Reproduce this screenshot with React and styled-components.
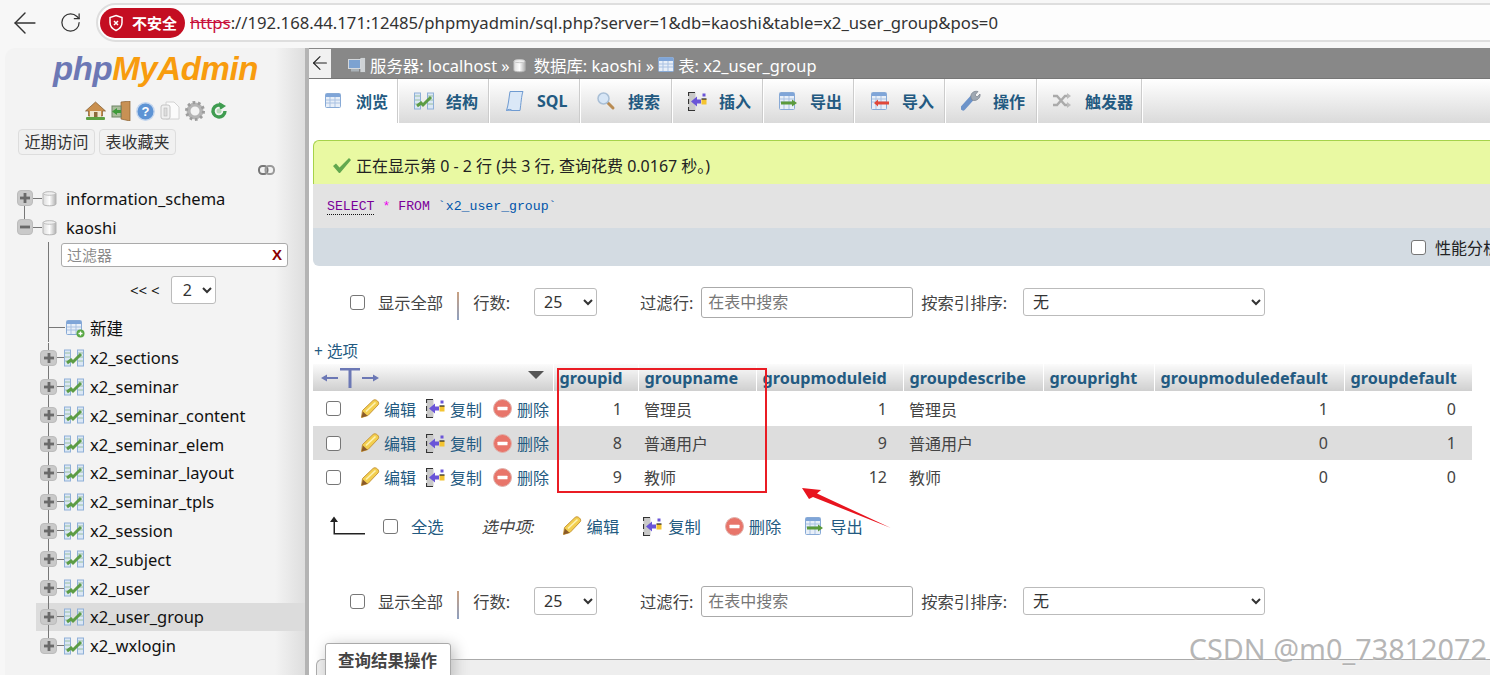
import React from 'react'
import styled, { createGlobalStyle } from 'styled-components'
import { ArrowLeft, RotateCw } from 'lucide-react'

const FONT = '"Noto Sans", "Noto Sans CJK SC", sans-serif'

const Global = createGlobalStyle`
  html, body { margin: 0; padding: 0; background: #fff; overflow: hidden; }
  body { font-family: ${FONT}; font-size: 16px; color: #444; }
  * { box-sizing: border-box; }
`

const Page = styled.div`
  position: relative;
  width: 1490px;
  height: 675px;
  overflow: hidden;
  display: flex;
  flex-direction: column;
  background: #f7f7f7;
`

/* browser chrome */
const BrowserBar = styled.div`
  flex: 0 0 48px;
  display: flex;
  align-items: flex-start;
  padding: 3px 0 0 13px;
  overflow: hidden;
`
const ChromeButton = styled.div`
  flex: 0 0 24px;
  min-width: 0;
  height: 39px;
  margin-right: 21px;
  display: flex;
  align-items: center;
  justify-content: center;
  color: #333;
  & > svg { flex: none; }
`
const AddressPill = styled.div`
  flex: 0 0 1440px;
  height: 39px;
  margin-left: -7px;
  border: 2px solid #dedede;
  border-radius: 20px;
  background: #fdfdfd;
  display: flex;
  align-items: center;
  padding-left: 2px;
`
const Insecure = styled.div`
  flex: 0 0 85px;
  height: 30px;
  border-radius: 15px;
  background: #c40e22;
  color: #fff;
  font-size: 15px;
  font-weight: 700;
  display: flex;
  align-items: center;
  padding-left: 7px;
  gap: 7px;
  white-space: nowrap;
`
const Url = styled.div`
  margin-left: 5px;
  font-size: 16.7px;
  color: #333;
  white-space: nowrap;
`
const Scheme = styled.span`
  color: #c8103a;
  text-decoration: line-through;
`

const Body = styled.div`
  flex: 1;
  display: flex;
  min-height: 0;
`

/* left navigation */
const Sidebar = styled.div`
  flex: 0 0 300px;
  margin-left: 5px;
  border-radius: 10px 0 0 0;
  background: linear-gradient(to right, #f3f3f3 0, #f3f3f3 270px, #dedede 300px);
  color: #111;
  display: flex;
  flex-direction: column;
`
const Splitter = styled.div`
  flex: 0 0 4px;
  background: #b4b4b4;
`
const Logo = styled.div`
  margin: 1px 0 0 48px;
  font-family: "Liberation Sans", sans-serif;
  font-size: 33px;
  line-height: 40px;
  font-weight: 700;
  font-style: italic;
  letter-spacing: -0.4px;
  color: #f89c0e;
  white-space: nowrap;
`
const LogoPhp = styled.span`
  color: #6c78b5;
`
const NavIcons = styled.div`
  margin: 11px 0 0 80px;
  height: 22px;
  display: flex;
  align-items: center;
  gap: 5px;
`
const Recent = styled.div`
  margin: 7px 0 0 13px;
  display: flex;
  gap: 4px;
`
const RecentButton = styled.div`
  width: 77px;
  height: 26px;
  border: 1px solid #ddd;
  border-radius: 4px;
  background: #f1f1f1;
  font-size: 16px;
  line-height: 24px;
  text-align: center;
  color: #333;
`
const LinkRow = styled.div`
  margin: 9px 0 0 253px;
  height: 14px;
  display: flex;
`
const Tree = styled.div`
  margin-top: 6px;
  display: flex;
  flex-direction: column;
`
const TreeRow = styled.div`
  position: relative;
  height: 28.8px;
  display: flex;
  align-items: center;
  white-space: nowrap;
  font-size: 16.5px;
  padding-left: ${props => (props.$db ? '12px' : '4px')};
  margin-left: ${props => (props.$db ? '0' : '31px')};
  background: ${props => (props.$active ? '#dcdcdc' : 'transparent')};
  &::before {
    content: '';
    position: absolute;
    background: #777;
    width: 1px;
    left: ${props => (props.$db ? '19px' : '12px')};
    top: ${props => (props.$first ? '14px' : '0')};
    bottom: ${props => (props.$last ? '14px' : '0')};
  }
`
const NewRow = styled(TreeRow)`
  margin-bottom: 1px;
`
const Expander = styled.span`
  position: relative;
  z-index: 1;
  flex: 0 0 ${props => (props.$db ? 16 : 17)}px;
  height: 16px;
  border-radius: 4px;
  background: #c9c9c9;
  border: 1px solid #bcbcbc;
  display: flex;
  align-items: center;
  justify-content: center;
`
const Stub = styled.span`
  flex: 0 0 ${props => props.$w}px;
  margin-left: ${props => props.$l || 0}px;
  height: 1px;
  background: #777;
`
const RowName = styled.span`
  margin-left: ${props => props.$gap}px;
`
const FilterBlock = styled.div`
  margin-left: 31px;
  padding: 1px 0 10px 11px;
  position: relative;
  &::before {
    content: '';
    position: absolute;
    left: 12px;
    top: 0;
    bottom: 0;
    width: 1px;
    background: #777;
  }
`
const TreeFilter = styled.div`
  margin-left: 14px;
  width: 227px;
  height: 24px;
  border: 1px solid #aaa;
  border-radius: 3px;
  background: #fff;
  display: flex;
  align-items: center;
  justify-content: space-between;
  padding: 0 5px 0 5px;
  font-size: 15px;
  color: #8a8a8a;
`
const ClearX = styled.span`
  font-family: "Liberation Sans", sans-serif;
  font-weight: 700;
  font-size: 15px;
  color: #8b0000;
`
const Pager = styled.div`
  margin: 9px 0 0 83px;
  height: 28px;
  display: flex;
  align-items: center;
  gap: 11px;
  font-size: 15px;
  color: #111;
`
const SmallSelect = styled.select`
  display: block;
  width: ${props => props.$w}px;
  height: 28px;
  border: 1px solid #bbb;
  border-radius: 3px;
  background: #fff;
  font-family: ${FONT};
  font-size: 16px;
  color: #333;
  padding-left: ${props => props.$pad}px;
`

/* main frame */
const Main = styled.div`
  flex: 1;
  min-width: 0;
  background: #fff;
  overflow: hidden;
  display: flex;
  flex-direction: column;
`
const ServerBar = styled.div`
  flex: 0 0 31px;
  background: #888;
  border-bottom: 1px solid #777;
  display: flex;
  align-items: center;
  color: #fff;
  font-size: 16.4px;
  white-space: nowrap;
`
const Collapse = styled.div`
  flex: 0 0 22px;
  height: 29px;
  background: #f1f1f1;
  color: #222;
  display: flex;
  align-items: center;
  justify-content: center;
  margin-right: 17px;
`
const Crumb = styled.span`
  display: flex;
  align-items: center;
  gap: ${props => props.$gap}px;
  margin-right: 3px;
  padding-top: 4px;
`
const Tabs = styled.div`
  flex: 0 0 44px;
  display: flex;
  background: linear-gradient(#fff, #dadada);
`
const Tab = styled.div`
  flex: 0 0 ${props => props.$w}px;
  height: 44px;
  display: flex;
  align-items: center;
  padding-left: ${props => props.$pad}px;
  gap: ${props => props.$gap}px;
  border-right: 1px solid #fff;
  box-shadow: inset -1px 0 0 #ccc;
  background: ${props => (props.$active ? '#fff' : 'transparent')};
  color: #235a81;
  font-weight: 700;
  font-size: 16px;
  white-space: nowrap;
`
const Notice = styled.div`
  margin: 17px -40px 0 4px;
  height: 44px;
  background: #e9f9a2;
  border: solid #a6d24a;
  border-width: 1px 0 0 1px;
  border-radius: 6px 0 0 0;
  display: flex;
  align-items: center;
  padding: 4px 0 0 18px;
  gap: 4px;
  color: #222;
  font-size: 16px;
`
const SqlBox = styled.div`
  margin: 0 -40px 0 4px;
  height: 44px;
  background: #e3e3e3;
  padding: 14px 0 0 14px;
  font-family: "Liberation Mono", monospace;
  font-size: 13.2px;
  line-height: 17px;
  white-space: pre;
  color: #0055aa;
`
const Keyword = styled.span`
  color: #7a0099;
  ${props => (props.$dotted ? 'border-bottom: 1px dotted #111;' : '')}
`
const Star = styled.span`
  color: #ee00ee;
`
const ToolBox = styled.div`
  margin: 0 -9px 0 4px;
  height: 38px;
  background: #d3dbe2;
  border-radius: 0 0 0 6px;
  display: flex;
  justify-content: flex-end;
  align-items: center;
  gap: 9px;
  color: #222;
  font-size: 16px;
`
const Check = styled.input.attrs({ type: 'checkbox' })`
  appearance: none;
  display: block;
  flex: 0 0 15px;
  width: 15px;
  height: 15px;
  margin: 0;
  border: 1.5px solid #767676;
  border-radius: 3px;
  background: #fff;
`
const NavRow = styled.div`
  margin-top: ${props => props.$top}px;
  flex: 0 0 34px;
  min-height: 0;
  display: flex;
  align-items: center;
  padding-left: 41px;
  font-size: 16.3px;
  color: #444;
  white-space: nowrap;
`
const Gap = styled.span`
  margin-left: ${props => props.$l}px;
  flex: none;
`
const NavSep = styled.span`
  flex: 0 0 2px;
  height: 28px;
  margin: 4px 0 -4px 14px;
  background: linear-gradient(#c9a080, #8ea0c0);
`
const TextInput = styled.input`
  flex: 0 0 212px;
  min-width: 0;
  height: 31px;
  margin-left: 8px;
  border: 1px solid #aaa;
  border-radius: 3px;
  padding: 0 6px;
  font-family: ${FONT};
  font-size: 16px;
  color: #444;
  &::placeholder { color: #777; opacity: 1; }
`
const Options = styled.div`
  margin: 20px 0 0 5px;
  height: 24px;
  flex: none;
  font-size: 15.5px;
  line-height: 24px;
  color: #235a81;
`
const Results = styled.table`
  margin: 1px 0 0 4px;
  width: 1159px;
  flex: none;
  table-layout: fixed;
  border-collapse: collapse;
  font-size: 16px;
  color: #444;
`
const Th = styled.th`
  height: 27px;
  padding: 0 0 0 6px;
  text-align: left;
  font-weight: 700;
  font-size: 16.2px;
  line-height: 22px;
  color: #235a81;
  background: linear-gradient(#fbfbfb, #cfcfcf);
  border-right: 1px solid #fff;
  white-space: nowrap;
  overflow: hidden;
`
const HeadTools = styled.div`
  height: 22px;
  display: flex;
  justify-content: space-between;
  align-items: center;
  padding: 0 9px 0 1px;
`
const SortMark = styled.span`
  display: flex;
  margin-bottom: 6px;
`
const Row = styled.tr`
  height: ${props => props.$h}px;
  background: ${props => (props.$even ? '#ddd' : '#fff')};
`
const Td = styled.td`
  padding: ${props => (props.$num ? '0 16px 0 0' : '0 0 0 6px')};
  text-align: ${props => (props.$num ? 'right' : 'left')};
  white-space: nowrap;
`
const ActionCell = styled.div`
  height: 20px;
  display: flex;
  align-items: center;
  padding-left: 7px;
  color: #235a81;
`
const ActionItem = styled.span`
  display: inline-flex;
  align-items: center;
  flex: none;
  gap: ${props => props.$gap}px;
  margin-left: ${props => props.$l}px;
  white-space: nowrap;
  color: #235a81;
`
const BulkRow = styled.div`
  margin-top: 15px;
  flex: 0 0 34px;
  display: flex;
  align-items: center;
  padding-left: 20px;
  font-size: 16.3px;
  color: #235a81;
  white-space: nowrap;
`
const Italic = styled.span`
  margin-left: 38px;
  font-style: italic;
  color: #444;
`
const Fieldset = styled.div`
  position: relative;
  margin: 41px 0 0 7px;
  flex: 1;
  border: 1px solid #aaa;
  border-width: 1px 0 0 1px;
  border-radius: 6px 0 0 0;
  background: #eee;
`
const Legend = styled.div`
  position: absolute;
  left: 8px;
  top: -17px;
  width: 126px;
  height: 40px;
  background: #fff;
  border: 1px solid #aaa;
  border-radius: 3px 3px 0 0;
  box-shadow: 3px 3px 15px #bbb;
  padding: 3px 0 0 12px;
  font-weight: 700;
  font-size: 16.5px;
  line-height: 28px;
  color: #444;
  white-space: nowrap;
`

/* annotations laid over the screenshot */
const RedBox = styled.div`
  position: absolute;
  left: 557px;
  top: 368px;
  width: 210px;
  height: 125px;
  border: 2px solid #ea1c24;
`
const Arrow = styled.svg`
  position: absolute;
  left: 0;
  top: 0;
  pointer-events: none;
`
const Watermark = styled.div`
  position: absolute;
  right: 3px;
  top: 630px;
  font-family: "Noto Sans", sans-serif;
  font-size: 28.8px;
  line-height: 38px;
  color: rgba(110, 110, 110, 0.5);
  text-shadow: 0 0 2px #fff;
  white-space: nowrap;
`

/* small icon drawings */
const PlusBox = ({ minus }) => (
  <svg width="10" height="10" viewBox="0 0 10 10">
    <rect x="0" y="3.6" width="10" height="2.8" fill="#6a6a6a" />
    {!minus && <rect x="3.6" y="0" width="2.8" height="10" fill="#6a6a6a" />}
  </svg>
)
const DbIcon = ({ size = 15 }) => (
  <svg width={size} height={size + 2} viewBox="0 0 15 17">
    <defs>
      <linearGradient id="cyl" x1="0" x2="1" y1="0" y2="0">
        <stop offset="0" stopColor="#dcdcdc" />
        <stop offset="0.5" stopColor="#fdfdfd" />
        <stop offset="1" stopColor="#b0b0b0" />
      </linearGradient>
    </defs>
    <path d="M1 3.5C1 1.5 14 1.5 14 3.5V14C14 16.4 1 16.4 1 14Z" fill="url(#cyl)" stroke="#b4b4b4" />
    <ellipse cx="7.5" cy="3.5" rx="6" ry="1.8" fill="#efefef" stroke="#c0c0c0" />
  </svg>
)
const TableIcon = ({ badge }) => (
  <svg width="20" height="20" viewBox="0 0 20 20">
    <rect x="1.5" y="2.5" width="15" height="14" rx="1" fill="#e8eff8" stroke="#88aad6" />
    <rect x="2" y="3" width="14" height="3" fill="#7fa5d8" />
    <path d="M2 9h14M2 12h14M6 6v10M11 6v10" stroke="#a9c1e2" strokeWidth="1" />
    {badge && <circle cx="15.5" cy="15.5" r="4" fill="#5aa845" />}
    {badge && <path d="M13.5 15.5h4M15.5 13.5v4" stroke="#fff" strokeWidth="1.3" />}
  </svg>
)
const StructIcon = () => (
  <svg width="20" height="18" viewBox="0 0 20 18">
    <rect x="0.5" y="1" width="6" height="16" fill="#dbe7f5" stroke="#8fb0d8" />
    <rect x="13.5" y="1" width="6" height="16" fill="#dbe7f5" stroke="#8fb0d8" />
    <path d="M1 4h5M14 4h5M1 8h5M14 8h5M1 12h5M14 12h5" stroke="#9ac0a0" />
    <path d="M3 14L7 11L9 13L17 5" fill="none" stroke="#5c9c45" strokeWidth="3" />
  </svg>
)
const SqlIcon = () => (
  <svg width="19" height="22" viewBox="0 0 19 22">
    <path d="M5 1.5H18C16.5 5 16 14 15 20.5H1.5C3.5 15 4 7 5 1.5Z" fill="#dbe8f7" stroke="#6f9bd1" />
    <path d="M1.5 20.5C3 19 6 19 7 20.5" fill="#a8c4e8" stroke="#6f9bd1" />
  </svg>
)
const SearchIcon = () => (
  <svg width="20" height="20" viewBox="0 0 20 20">
    <path d="M11 11L17 17" stroke="#b98b52" strokeWidth="3" strokeLinecap="round" />
    <circle cx="7.5" cy="7.5" r="5.5" fill="#d7e6f6" stroke="#a9bfd6" strokeWidth="1.5" />
  </svg>
)
const InsertIcon = () => (
  <svg width="19" height="19" viewBox="0 0 19 19">
    <rect x="0.5" y="0.5" width="7" height="18" fill="#c9c9c9" />
    <path d="M0.5 4V0.5H7M0.5 15V18.5H7M0.5 7V12" fill="none" stroke="#333" strokeWidth="1.2" />
    <path d="M3 9.5L9 4.5V7.5H13V11.5H9V14.5Z" fill="#6a55d8" />
    <rect x="13.5" y="7" width="5" height="5.5" fill="#f4c431" />
    <path d="M13.5 7H18.5" stroke="#222" strokeWidth="1.2" />
    <rect x="14.5" y="1.5" width="3" height="3" fill="#6a55d8" />
  </svg>
)
const ExportIcon = ({ color = '#5b9a3c', reverse }) => (
  <svg width="20" height="20" viewBox="0 0 20 20">
    <rect x="1.5" y="1.5" width="15" height="17" rx="1" fill="#e8eff8" stroke="#88aad6" />
    <rect x="2" y="2" width="14" height="3" fill="#7fa5d8" />
    <path d="M2 8h14M2 11h14M6 5v13M11 5v13" stroke="#a9c1e2" />
    {reverse ? (
      <path d="M19 10.5H8V8.5L4 12L8 15.5V13.5H19Z" fill={color} />
    ) : (
      <path d="M3 10.5H14V8.5L19 12L14 15.5V13.5H3Z" fill={color} />
    )}
  </svg>
)
const WrenchIcon = () => (
  <svg width="20" height="22" viewBox="0 0 20 22">
    <path d="M2 18L11 8" stroke="#6c93c9" strokeWidth="5" strokeLinecap="round" />
    <path d="M10 8C9 3 13 0.5 17 1.5L14 5L16 7L19 4C20 8 15 12 11 10Z" fill="#9fa8b2" stroke="#7b838c" strokeWidth="0.7" />
  </svg>
)
const TriggerIcon = () => (
  <svg width="19" height="16" viewBox="0 0 19 16">
    <path d="M1 3H5L13 12H16M1 12H5L13 3H16" fill="none" stroke="#aaa" strokeWidth="2.4" />
    <path d="M15 0L19 3L15 6ZM15 9L19 12L15 15Z" fill="#bbb" />
  </svg>
)
const Pencil = () => (
  <svg width="20" height="20" viewBox="0 0 20 20">
    <path d="M2.5 11.5L13 1.5C14 .5 16 .5 17.5 2C19 3.5 19 5 18 6L8 16.5L1.5 18.5Z" fill="#f3cf4f" stroke="#c8973a" strokeWidth="1" />
    <path d="M1.5 18.5L2.8 12.5L7.5 16.8Z" fill="#8a5a2a" />
    <path d="M6 12.5L15.5 3.5" stroke="#fdf2b5" strokeWidth="1.6" />
  </svg>
)
const DeleteIcon = () => (
  <svg width="19" height="19" viewBox="0 0 19 19">
    <circle cx="9.5" cy="9.5" r="9" fill="#e8756a" stroke="#e0b0aa" />
    <rect x="4.5" y="7.8" width="10" height="3.4" rx="0.5" fill="#fff" />
  </svg>
)
const Home = () => (
  <svg width="21" height="20" viewBox="0 0 21 20">
    <path d="M10.5 1L20.5 10H17.5V15H3.5V10H0.5Z" fill="#c98f4e" stroke="#7e5a2e" strokeWidth="0.7" />
    <rect x="5" y="10" width="11" height="6" fill="#efe5d0" />
    <rect x="9" y="11" width="3.5" height="5" fill="#8c6a3c" />
    <rect x="1" y="16" width="19" height="3" rx="1" fill="#5ca142" />
  </svg>
)
const ExitIcon = () => (
  <svg width="20" height="20" viewBox="0 0 20 20">
    <path d="M10 1L19 0V20L10 18Z" fill="#c89154" stroke="#8a6232" strokeWidth="0.7" />
    <rect x="1" y="5" width="9" height="11" fill="#a9bd9c" stroke="#6e8465" />
    <path d="M1 10.5L6 7V9H10V12H6V14Z" fill="#3f9a3a" />
  </svg>
)
const HelpIcon = () => (
  <svg width="19" height="19" viewBox="0 0 19 19">
    <circle cx="9.5" cy="9.5" r="8.7" fill="#5d93d4" stroke="#c4d6ee" strokeWidth="1.4" />
    <text x="9.5" y="14" textAnchor="middle" fontSize="13" fontWeight="700" fill="#fff" fontFamily="Liberation Sans">?</text>
  </svg>
)
const DocIcon = () => (
  <svg width="20" height="20" viewBox="0 0 20 20">
    <path d="M6 1H14L19 6V18H6Z" fill="#fbfbfb" stroke="#d2d2d2" />
    <rect x="1" y="4" width="9" height="14" rx="2" fill="#f0f0f0" stroke="#c4c4c4" />
    <rect x="4" y="7" width="3" height="8" fill="#ddd" stroke="#b9b9b9" strokeWidth="0.6" />
  </svg>
)
const GearIcon = () => (
  <svg width="20" height="20" viewBox="0 0 20 20">
    <circle cx="10" cy="10" r="6.5" fill="none" stroke="#b4b4b4" strokeWidth="4" />
    <circle cx="10" cy="10" r="8.5" fill="none" stroke="#9c9c9c" strokeWidth="3" strokeDasharray="2.6 2.75" />
  </svg>
)
const ReloadIcon = () => (
  <svg width="18" height="18" viewBox="0 0 18 18">
    <path d="M15 9A6 6 0 1 1 12 3.8" fill="none" stroke="#3f9c50" strokeWidth="3.4" />
    <path d="M9 0L16 4L10 8Z" fill="#3f9c50" />
    <circle cx="9" cy="9" r="2.5" fill="#b6d9b8" />
  </svg>
)
const ChainIcon = () => (
  <svg width="17" height="12" viewBox="0 0 17 12">
    <rect x="1" y="2" width="8.5" height="8" rx="3.5" fill="none" stroke="#777" strokeWidth="2" />
    <rect x="7.5" y="2" width="8.5" height="8" rx="3.5" fill="none" stroke="#999" strokeWidth="2" />
  </svg>
)
const ServerIcon = () => (
  <svg width="18" height="16" viewBox="0 0 18 16">
    <rect x="12" y="0.5" width="5.5" height="15" fill="#cfd3d6" stroke="#777" strokeWidth="0.6" />
    <rect x="0.5" y="2.5" width="12" height="9" fill="#7ca2d1" stroke="#d4d8dc" />
    <rect x="3" y="12" width="8" height="2.5" fill="#aab2b8" />
  </svg>
)
const ShieldX = () => (
  <svg width="18" height="18" viewBox="0 0 18 18" fill="none" stroke="#fff" strokeWidth="1.5">
    <path d="M9 1.5L15 3.5V8.5C15 12.5 12.5 15 9 16.5C5.5 15 3 12.5 3 8.5V3.5Z" />
    <path d="M7 7L11 11M11 7L7 11" />
  </svg>
)
const ColumnTool = () => (
  <svg width="60" height="22" viewBox="0 0 60 22">
    <path d="M1 11L7 7.5V10H18V12H7V14.5Z" fill="#6c78b5" />
    <path d="M59 11L53 7.5V10H42V12H53V14.5Z" fill="#6c78b5" />
    <path d="M20 1H40V3.5H31.5V21H28.5V3.5H20Z" fill="#6c78b5" />
  </svg>
)
const SortDown = () => (
  <svg width="16" height="8" viewBox="0 0 16 8">
    <path d="M0 0H16L8 8Z" fill="#555" />
  </svg>
)
const CheckMark = () => (
  <svg width="20" height="18" viewBox="0 0 20 18">
    <path d="M1 10L4 7.5L7.5 11.5L17 2L19 4L8 17H7Z" fill="#62a84e" />
  </svg>
)
const UpCorner = () => (
  <svg width="37" height="20" viewBox="0 0 37 20">
    <path d="M1 6L5 0.5L9 6H6V17H36V18.5H4.5V6Z" fill="#222" />
  </svg>
)

const tableNames = [
  'x2_sections', 'x2_seminar', 'x2_seminar_content', 'x2_seminar_elem', 'x2_seminar_layout',
  'x2_seminar_tpls', 'x2_session', 'x2_subject', 'x2_user', 'x2_user_group', 'x2_wxlogin'
]

const tabs = [
  { label: '浏览', icon: <TableIcon />, w: 90, pad: 15, gap: 12, active: true },
  { label: '结构', icon: <StructIcon />, w: 91, pad: 15, gap: 12 },
  { label: 'SQL', icon: <SqlIcon />, w: 91, pad: 15, gap: 13 },
  { label: '搜索', icon: <SearchIcon />, w: 92, pad: 15, gap: 12 },
  { label: '插入', icon: <InsertIcon />, w: 91, pad: 15, gap: 12 },
  { label: '导出', icon: <ExportIcon />, w: 91, pad: 14, gap: 12 },
  { label: '导入', icon: <ExportIcon color="#e0483a" reverse />, w: 91, pad: 15, gap: 12 },
  { label: '操作', icon: <WrenchIcon />, w: 92, pad: 15, gap: 12 },
  { label: '触发器', icon: <TriggerIcon />, w: 105, pad: 14, gap: 14 }
]

const columns = [
  { w: 240 }, { w: 85, name: 'groupid' }, { w: 118, name: 'groupname' }, { w: 147, name: 'groupmoduleid' },
  { w: 140, name: 'groupdescribe' }, { w: 111, name: 'groupright' }, { w: 190, name: 'groupmoduledefault' },
  { w: 128, name: 'groupdefault' }
]

const rows = [
  { id: 1, name: '管理员', mod: 1, md: 1, gd: 0, h: 35 },
  { id: 8, name: '普通用户', mod: 9, md: 0, gd: 1, h: 34 },
  { id: 9, name: '教师', mod: 12, md: 0, gd: 0, h: 34 }
]

const Navigation = ({ top }) => (
  <NavRow $top={top}>
    <Check readOnly />
    <Gap $l={13}>显示全部</Gap>
    <NavSep />
    <Gap $l={14}>行数:</Gap>
    <Gap $l={24}>
      <SmallSelect $w={63} $pad={5} defaultValue="25"><option>25</option></SmallSelect>
    </Gap>
    <Gap $l={43}>过滤行:</Gap>
    <TextInput placeholder="在表中搜索" />
    <Gap $l={8}>按索引排序:</Gap>
    <Gap $l={16}>
      <SmallSelect $w={242} $pad={5} defaultValue="无"><option>无</option></SmallSelect>
    </Gap>
  </NavRow>
)

export default function App () {
  return (
    <Page>
      <Global />
      <BrowserBar>
        <ChromeButton><ArrowLeft size={34} strokeWidth={1} /></ChromeButton>
        <ChromeButton><RotateCw size={23} strokeWidth={1.3} /></ChromeButton>
        <AddressPill>
          <Insecure><ShieldX />不安全</Insecure>
          <Url><Scheme>https</Scheme>://192.168.44.171:12485/phpmyadmin/sql.php?server=1&amp;db=kaoshi&amp;table=x2_user_group&amp;pos=0</Url>
        </AddressPill>
      </BrowserBar>
      <Body>
        <Sidebar>
          <Logo><LogoPhp>php</LogoPhp>MyAdmin</Logo>
          <NavIcons>
            <Home /><ExitIcon /><HelpIcon /><DocIcon /><GearIcon /><ReloadIcon />
          </NavIcons>
          <Recent>
            <RecentButton>近期访问</RecentButton>
            <RecentButton>表收藏夹</RecentButton>
          </Recent>
          <LinkRow><ChainIcon /></LinkRow>
          <Tree>
            <TreeRow $db $first>
              <Expander $db><PlusBox /></Expander><Stub $w={9} /><DbIcon /><RowName $gap={9}>information_schema</RowName>
            </TreeRow>
            <TreeRow $db $last>
              <Expander $db><PlusBox minus /></Expander><Stub $w={9} /><DbIcon /><RowName $gap={9}>kaoshi</RowName>
            </TreeRow>
            <FilterBlock>
              <TreeFilter>过滤器<ClearX>X</ClearX></TreeFilter>
              <Pager>&lt;&lt; &lt;<SmallSelect $w={45} $pad={7} defaultValue="2"><option>2</option></SmallSelect></Pager>
            </FilterBlock>
            <NewRow>
              <Stub $l={8} $w={17} /><TableIcon badge /><RowName $gap={5}>新建</RowName>
            </NewRow>
            {tableNames.map((name, i) => (
              <TreeRow key={name} $active={name === 'x2_user_group'} $last={i === tableNames.length - 1}>
                <Expander><PlusBox /></Expander><Stub $w={7} /><StructIcon /><RowName $gap={6}>{name}</RowName>
              </TreeRow>
            ))}
          </Tree>
        </Sidebar>
        <Splitter />
        <Main>
          <ServerBar>
            <Collapse><ArrowLeft size={22} strokeWidth={1.2} /></Collapse>
            <Crumb $gap={4}><ServerIcon />服务器: localhost »</Crumb>
            <Crumb $gap={8}><DbIcon size={13} />数据库: kaoshi »</Crumb>
            <Crumb $gap={1}><TableIcon />表: x2_user_group</Crumb>
          </ServerBar>
          <Tabs>
            {tabs.map(tab => (
              <Tab key={tab.label} $w={tab.w} $pad={tab.pad} $gap={tab.gap} $active={tab.active}>
                {tab.icon}{tab.label}
              </Tab>
            ))}
          </Tabs>
          <Notice><CheckMark />正在显示第 0 - 2 行 (共 3 行, 查询花费 0.0167 秒。)</Notice>
          <SqlBox><Keyword $dotted>SELECT</Keyword> <Star>*</Star> <Keyword>FROM</Keyword> `x2_user_group`</SqlBox>
          <ToolBox><Check readOnly /><span>性能分析</span></ToolBox>
          <Navigation top={19} />
          <Options>+ 选项</Options>
          <Results>
            <colgroup>
              {columns.map((col, i) => <col key={i} width={col.w} />)}
            </colgroup>
            <thead>
              <tr>
                <Th><HeadTools><ColumnTool /><SortMark><SortDown /></SortMark></HeadTools></Th>
                {columns.slice(1).map(col => <Th key={col.name}>{col.name}</Th>)}
              </tr>
            </thead>
            <tbody>
              {rows.map((row, i) => (
                <Row key={row.id} $h={row.h} $even={i === 1}>
                  <Td>
                    <ActionCell>
                      <Check readOnly />
                      <ActionItem $l={19} $gap={4}><Pencil />编辑</ActionItem>
                      <ActionItem $l={10} $gap={5}><InsertIcon />复制</ActionItem>
                      <ActionItem $l={11} $gap={5}><DeleteIcon />删除</ActionItem>
                    </ActionCell>
                  </Td>
                  <Td $num>{row.id}</Td>
                  <Td>{row.name}</Td>
                  <Td $num>{row.mod}</Td>
                  <Td>{row.name}</Td>
                  <Td />
                  <Td $num>{row.md}</Td>
                  <Td $num>{row.gd}</Td>
                </Row>
              ))}
            </tbody>
          </Results>
          <BulkRow>
            <UpCorner />
            <Gap $l={17}><Check readOnly /></Gap>
            <Gap $l={13}>全选</Gap>
            <Italic>选中项:</Italic>
            <ActionItem $l={27} $gap={5}><Pencil />编辑</ActionItem>
            <ActionItem $l={24} $gap={6}><InsertIcon />复制</ActionItem>
            <ActionItem $l={24} $gap={5}><DeleteIcon />删除</ActionItem>
            <ActionItem $l={23} $gap={6}><ExportIcon />导出</ActionItem>
          </BulkRow>
          <Navigation top={41} />
          <Fieldset><Legend>查询结果操作</Legend></Fieldset>
        </Main>
      </Body>
      <RedBox />
      <Arrow width="1490" height="675" viewBox="0 0 1490 675">
        <polygon points="802,488 821,490 817,493.5 891,528 813,497 809,499" fill="#e8141e" />
      </Arrow>
      <Watermark>CSDN @m0_73812072</Watermark>
    </Page>
  )
}
